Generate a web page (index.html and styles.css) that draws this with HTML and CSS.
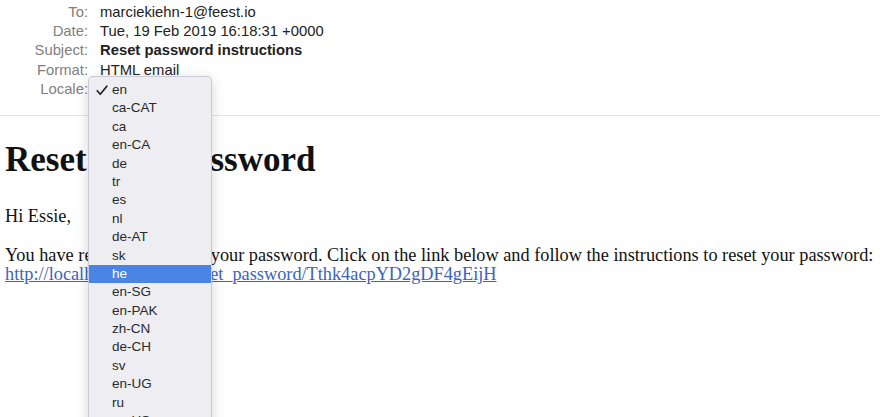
FILE: index.html
```html
<!DOCTYPE html>
<html>
<head>
<meta charset="utf-8">
<link rel="stylesheet" href="styles.css">
</head>
<body>
<div class="page">
  <header class="meta">
    <div class="label">To:</div><div class="value">marciekiehn-1@feest.io</div>
    <div class="label">Date:</div><div class="value">Tue, 19 Feb 2019 16:18:31 +0000</div>
    <div class="label">Subject:</div><div class="value strong">Reset password instructions</div>
    <div class="label">Format:</div><div class="value">HTML email</div>
    <div class="label">Locale:</div><div class="value"></div>
  </header>
  <main class="mail">
    <h1>Reset your password</h1>
    <p>Hi Essie,</p>
    <p>You have requested to reset your password. Click on the link below and follow the instructions to reset your password:<br><a href="#">http://localhost:3000/api/reset_password/Tthk4acpYD2gDF4gEijH</a></p>
  </main>
  <ul class="popup">
    <li class="item"><svg class="check" width="12" height="11" viewBox="0 0 12 11"><path d="M1.2 5.8 L4.3 9.2 L10.8 1.2" fill="none" stroke="#222" stroke-width="1.7" stroke-linecap="round" stroke-linejoin="round"/></svg>en</li>
    <li class="item">ca-CAT</li>
    <li class="item">ca</li>
    <li class="item">en-CA</li>
    <li class="item">de</li>
    <li class="item">tr</li>
    <li class="item">es</li>
    <li class="item">nl</li>
    <li class="item">de-AT</li>
    <li class="item">sk</li>
    <li class="item active">he</li>
    <li class="item">en-SG</li>
    <li class="item">en-PAK</li>
    <li class="item">zh-CN</li>
    <li class="item">de-CH</li>
    <li class="item">sv</li>
    <li class="item">en-UG</li>
    <li class="item">ru</li>
    <li class="item">en-US</li>
  </ul>
</div>
</body>
</html>
```

FILE: styles.css
```css
html, body {
  margin: 0;
  padding: 0;
  height: 100%;
  overflow: hidden;
  background: #ffffff;
}

.page {
  position: relative;
  height: 100%;
  overflow: hidden;
}

.meta {
  display: grid;
  grid-template-columns: 88px 1fr;
  column-gap: 12px;
  grid-auto-rows: 19.2px;
  align-items: center;
  padding: 3px 0 16px;
  border-bottom: 1px solid #e4e4ea;
  font-family: "Liberation Sans", Arial, sans-serif;
  font-size: 14.8px;
  line-height: 19.2px;
}

.label {
  text-align: right;
  color: #808080;
}

.value {
  color: #222222;
}

.strong {
  font-weight: bold;
}

.mail {
  padding-left: 5px;
  font-family: "Liberation Serif", "Times New Roman", serif;
  color: #111111;
}

.mail h1 {
  margin: 24px 0 27px;
  font-size: 35px;
  font-weight: bold;
  line-height: normal;
  color: #111111;
}

.mail p {
  margin: 0 0 21px;
  font-size: 18.3px;
  line-height: 18.5px;
}

.mail a {
  color: #3c62c2;
  text-decoration: underline;
}

.popup {
  position: absolute;
  left: 88px;
  top: 76px;
  width: 122px;
  margin: 0;
  padding: 4px 0 0;
  list-style: none;
  background: #ededf2;
  border: 1px solid #c9cbd8;
  border-bottom: none;
  border-radius: 5px 5px 0 0;
  box-shadow: 0 3px 12px rgba(60, 60, 80, 0.22);
  font-family: "Liberation Sans", Arial, sans-serif;
  font-size: 13.5px;
  color: #2a2a2a;
}

.item {
  position: relative;
  height: 18.4px;
  line-height: 18.4px;
  padding-left: 23px;
}

.item.active {
  background: #4a85e6;
  color: #ffffff;
}

.check {
  position: absolute;
  left: 7px;
  top: 4px;
}
```
